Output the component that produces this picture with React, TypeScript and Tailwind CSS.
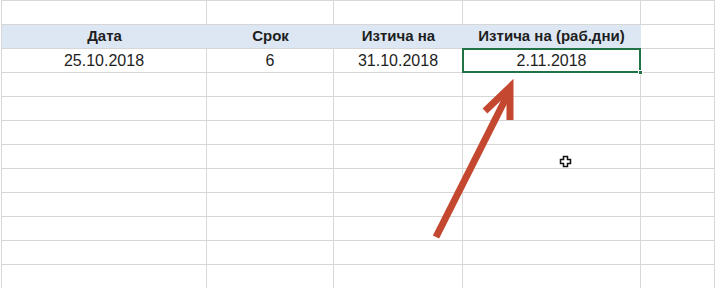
import React from 'react';

const cols = ['w-[205px]', 'w-[127px]', 'w-[129px]', 'w-[178px]', 'flex-1'];

const headers = ['Дата', 'Срок', 'Изтича на', 'Изтича на (раб.дни)', ''];
const values = ['25.10.2018', '6', '31.10.2018', '2.11.2018', ''];

function EmptyRow() {
  return (
    <div className="flex h-[24px] border-b border-[#d6d6d6]">
      {cols.map((w, i) => (
        <div key={i} className={`${w} h-full border-r border-[#d8d8d8]`} />
      ))}
    </div>
  );
}

export default function App() {
  return (
    <div
      className="relative w-[715px] h-[288px] overflow-hidden bg-white text-[#1e1e1e]"
      style={{ fontFamily: '"Liberation Sans", Arial, sans-serif' }}
    >
      <div className="ml-px border-l border-t border-[#d8d8d8]">
        {/* top blank row */}
        <EmptyRow />

        {/* header row */}
        <div className="flex h-[24px] border-b border-[#d6d6d6]">
          {headers.map((h, i) => (
            <div
              key={i}
              className={`${cols[i]} h-full flex items-center justify-center text-[15px] font-bold ${
                i < 4 ? 'bg-[#dde7f3]' : 'border-r border-[#d8d8d8]'
              } ${i === 3 ? 'border-r border-[#dde7f3]' : ''}`}
            >
              {h}
            </div>
          ))}
        </div>

        {/* data row */}
        <div className="flex h-[24px] border-b border-[#d6d6d6]">
          {values.map((v, i) => (
            <div
              key={i}
              className={`${cols[i]} relative h-full flex items-center justify-center text-[16px] border-r border-[#d8d8d8]`}
            >
              {v}
              {i === 3 && (
                <>
                  <div className="absolute -left-px -top-px -right-px -bottom-px border-2 border-[#217346]" />
                  <div className="absolute -right-[3px] -bottom-[3px] w-[5px] h-[5px] bg-[#217346] border border-white" />
                </>
              )}
            </div>
          ))}
        </div>

        {Array.from({ length: 9 }).map((_, i) => (
          <EmptyRow key={i} />
        ))}
      </div>

      {/* annotation arrow + cursor */}
      <svg className="absolute left-0 top-0 pointer-events-none" width="715" height="288" viewBox="0 0 715 288">
        <line x1="436" y1="237" x2="509" y2="92" stroke="#c4472f" strokeWidth="7" />
        <path d="M485 111 L510 87 L510 120" fill="none" stroke="#c4472f" strokeWidth="7" strokeLinejoin="miter" strokeMiterlimit="10" />
        <path
          d="M563.5 156.5 h4 v3 h3 v4 h-3 v3 h-4 v-3 h-3 v-4 h3 z"
          fill="#fff"
          stroke="#111"
          strokeWidth="1.5"
        />
      </svg>
    </div>
  );
}
